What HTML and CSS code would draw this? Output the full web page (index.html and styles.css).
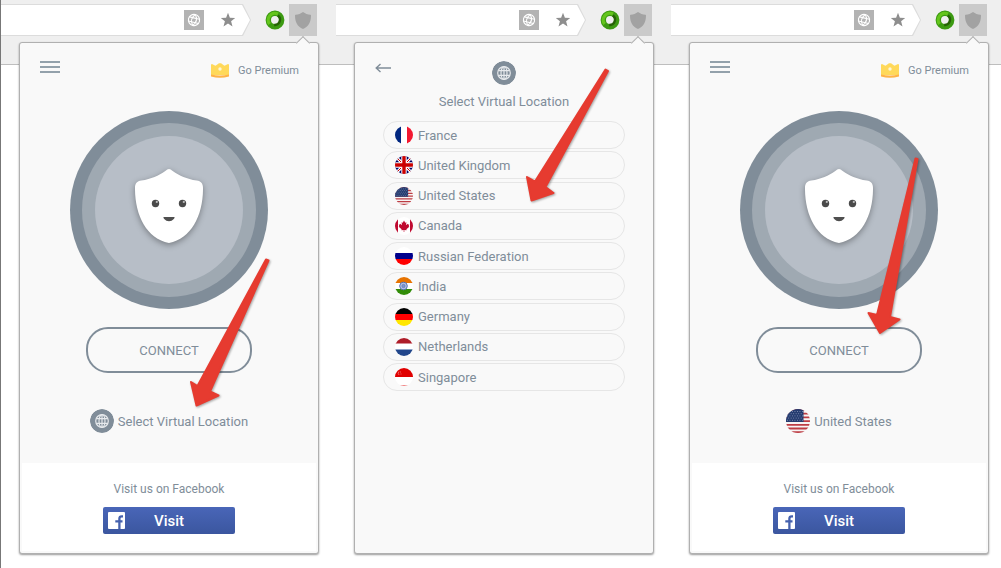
FILE: index.html
```html
<!DOCTYPE html>
<html lang="en">
<head>
    <meta charset="utf-8">
    <meta name="viewport" content="width=device-width, initial-scale=1">
    <title>Select Virtual Location</title>
    <link rel="stylesheet" href="styles.css">
</head>
<body>

    <!-- shared icons -->
    <svg class="sprite" width="0" height="0" aria-hidden="true">
        <symbol id="globe" viewBox="0 0 24 24">
            <circle cx="12" cy="12" r="12" fill="#808d99"/>
            <g fill="none" stroke="#e6e9ec" stroke-width="1.2">
                <circle cx="12" cy="12" r="6.3"/>
                <ellipse cx="12" cy="12" rx="3" ry="6.3"/>
                <path d="M12 5.7v12.6M6.4 9.6h11.2M6.4 14.4h11.2"/>
            </g>
        </symbol>
        <symbol id="translate" viewBox="0 0 20 20">
            <path fill="#b3b3b3" d="M0 0h20v20H0z"/>
            <g fill="none" stroke="#fff" stroke-width="1.1" transform="rotate(14 10 10)">
                <circle cx="10" cy="10" r="5.6"/>
                <path d="M10 4.400q-4.800 5.600 0 11.200M10 4.400q4.800 5.600 0 11.200M5 8h10M5 12.300h10"/>
            </g>
        </symbol>
        <symbol id="star" viewBox="0 0 16 16">
            <path fill="#8e8e8e" d="M8 .8l1.9 4.9 5.3.3-4.1 3.3 1.4 5.2L8 11.6l-4.5 2.9 1.4-5.2L.8 6l5.3-.3z"/>
        </symbol>
        <symbol id="ring" viewBox="0 0 20 20">
            <circle cx="10" cy="10" r="6.700" fill="none" stroke="#3c9a12" stroke-width="5.400"/>
            <path fill="none" stroke="#64c51c" stroke-width="3.200" d="M4.600 14A6.700 6.700 0 0 1 13 4"/>
            <path fill="none" stroke="#276107" stroke-width="2.400" d="M12.800 5.600a5.200 5.200 0 0 1-3.600 9.400"/>
        </symbol>
        <symbol id="shield" viewBox="0 0 16 17">
            <path fill="#a2a2a2" d="M8 0c2.300 1.700 4.600 2.500 7.400 2.700.4 0 .6.300.6.700 0 6.100-2.400 11.300-8 13.600C2.400 14.700 0 9.500 0 3.400c0-.4.2-.7.6-.7C3.400 2.500 5.700 1.700 8 0z"/>
        </symbol>
        <symbol id="crown" viewBox="0 0 18 15">
            <path fill="#ffd95a" d="M0 1.500l1-.5 3.500 1.800L8 .3h2l3.500 2.500L17 1l1 .5V12H0z"/>
            <circle cx="9" cy="6" r="1.700" fill="#fff6d5"/>
            <path fill="#ffb347" d="M0 11.500q9 1.800 18 0v2.100q-9 2.400-18 0z"/>
        </symbol>
        <symbol id="face" viewBox="0 0 68 74">
            <path fill="#fff" d="M34 0c1.300 0 2.200.9 3.700 1.900 6.800 4.800 14 7.900 24 9.700 4.300.8 6.300 3 6.300 7.200C68.200 46 56.500 69.500 34 74 11.500 69.500-.2 46 0 18.800c0-4.200 2-6.400 6.300-7.200 10-1.800 17.200-4.900 24-9.700C31.800.9 32.700 0 34 0z"/>
            <circle cx="20.500" cy="34.500" r="3.700" fill="#4a4a4a"/>
            <circle cx="47.500" cy="34.500" r="3.700" fill="#4a4a4a"/>
            <circle cx="21.800" cy="32.900" r="1.100" fill="#bbb"/>
            <circle cx="48.800" cy="32.900" r="1.100" fill="#bbb"/>
            <path fill="#4f4f4f" d="M28.500 48h11q.3 1-.7 2-2 2.200-4.800 2.200T29.200 50q-1-1-.7-2z"/>
        </symbol>
        <symbol id="facebook" viewBox="0 0 17 17">
            <rect width="17" height="17" rx="1" fill="#fff"/>
            <path fill="none" stroke="#4460ad" stroke-width="2.300" d="M15 4.300h-1.300q-2.300 0-2.300 2.300V17M7.300 9.400h7.200"/>
        </symbol>
        <symbol id="flag-us" viewBox="0 0 24 24">
            <path fill="#f7f4f4" d="M0 0h24v24H0z"/>
            <path stroke="#bd3d44" stroke-width="1.800" d="M0 1h24M0 4.700h24M0 8.400h24M0 12.100h24M0 15.800h24M0 19.500h24M0 23.200h24"/>
            <path fill="#253c70" d="M0 0h17.500v13H0z"/>
            <path stroke="#8794b8" stroke-width=".9" stroke-dasharray=".9 1.600" d="M1 2.500h16M2.200 4.700h15M1 6.900h16M2.200 9.100h15M1 11.300h16"/>
        </symbol>
    </svg>

    <section class="pane">
        <div class="toolbar">
            <div class="omnibox">
                <div class="omnibox-inner">
                    <input class="address" type="text" aria-label="Address">
                    <svg class="icon-translate"><use href="#translate"/></svg>
                    <svg class="icon-star"><use href="#star"/></svg>
                </div>
            </div>
            <svg class="icon-ring"><use href="#ring"/></svg>
            <button class="extension" aria-label="Extension"><svg class="icon-shield"><use href="#shield"/></svg></button>
        </div>
        <div class="popup">
            <div class="home">
                <div class="top">
                    <button class="menu" aria-label="Menu"><span></span><span></span><span></span></button>
                    <a class="premium" href="#"><svg class="icon-crown"><use href="#crown"/></svg>Go Premium</a>
                </div>
                <div class="status"><div class="status-mid"><div class="status-in"><svg class="face"><use href="#face"/></svg></div></div></div>
                <button class="connect">CONNECT</button>
                <button class="location"><svg class="icon-location"><use href="#globe"/></svg>Select Virtual Location</button>
            </div>
            <div class="social">
                <p>Visit us on Facebook</p>
                <a class="visit" href="#"><svg class="icon-facebook"><use href="#facebook"/></svg><span>Visit</span></a>
            </div>
        </div>
        <svg class="pointer pointer-location" viewBox="0 0 90 160" aria-hidden="true"><path d="M80 11.500L82.500 12.500 24 143.500 32.500 147.500 10.500 157.500 5 134 11.500 138z"/></svg>
    </section>

    <section class="pane">
        <div class="toolbar">
            <div class="omnibox">
                <div class="omnibox-inner">
                    <input class="address" type="text" aria-label="Address">
                    <svg class="icon-translate"><use href="#translate"/></svg>
                    <svg class="icon-star"><use href="#star"/></svg>
                </div>
            </div>
            <svg class="icon-ring"><use href="#ring"/></svg>
            <button class="extension" aria-label="Extension"><svg class="icon-shield"><use href="#shield"/></svg></button>
        </div>
        <div class="popup">
            <div class="picker">
                <button class="back" aria-label="Back"><svg viewBox="0 0 16 10"><path fill="none" stroke="#808d99" stroke-width="1.400" d="M16 5H1.500M5.500 1L1.200 5l4.300 4"/></svg></button>
                <div class="picker-title">
                    <svg class="icon-location"><use href="#globe"/></svg>
                    <h1>Select Virtual Location</h1>
                </div>
                <ul class="countries">
                    <li><button><svg class="flag" viewBox="0 0 18 18"><path fill="#fff" d="M0 0h18v18H0z"/><path fill="#00267f" d="M0 0h6v18H0z"/><path fill="#f31830" d="M12 0h6v18h-6z"/></svg>France</button></li>
                    <li><button><svg class="flag" viewBox="0 0 18 18"><path fill="#006" d="M0 0h18v18H0z"/><path stroke="#fff" stroke-width="3" d="M0 0l18 18M18 0L0 18"/><path stroke="#c00" stroke-width="1" d="M0 0l18 18M18 0L0 18"/><path stroke="#fff" stroke-width="5.400" d="M9 0v18M0 9h18"/><path stroke="#c00" stroke-width="3.400" d="M9 0v18M0 9h18"/></svg>United Kingdom</button></li>
                    <li><button><svg class="flag"><use href="#flag-us"/></svg>United States</button></li>
                    <li><button><svg class="flag" viewBox="0 0 18 18"><path fill="#fff" d="M0 0h18v18H0z"/><path fill="#bf0a30" d="M0 0h3v18H0zM15 0h3v18h-3zM9 3.500l1.200 2.200 1.200-.5-.4 3 1.600-1.500.4.900 1.200-.2-.5 1.900.6.500-2.900 2.500.2 1-2.300-.3v2h-.6v-2l-2.300.3.2-1-2.900-2.500.6-.5-.5-1.900 1.200.2.400-.9 1.600 1.500-.4-3 1.200.5z"/></svg>Canada</button></li>
                    <li><button><svg class="flag" viewBox="0 0 18 18"><path fill="#fff" d="M0 0h18v6H0z"/><path fill="#00008b" d="M0 6h18v6H0z"/><path fill="#f00" d="M0 12h18v6H0z"/></svg>Russian Federation</button></li>
                    <li><button><svg class="flag" viewBox="0 0 18 18"><path fill="#fff" d="M0 0h18v18H0z"/><path fill="#e77300" d="M0 0h18v6H0z"/><path fill="#318c08" d="M0 12h18v6H0z"/><circle cx="8.500" cy="9" r="3.800" fill="#b8c5e6" stroke="#5470b4"/><circle cx="8.500" cy="9" r="1.700" fill="#7f97cf" stroke="#5470b4" stroke-width=".6"/></svg>India</button></li>
                    <li><button><svg class="flag" viewBox="0 0 18 18"><path d="M0 0h18v6H0z"/><path fill="#f00" d="M0 6h18v6H0z"/><path fill="#ffe600" d="M0 12h18v6H0z"/></svg>Germany</button></li>
                    <li><button><svg class="flag" viewBox="0 0 18 18"><path fill="#fff" d="M0 0h18v18H0z"/><path fill="#ae1c28" d="M0 0h18v5.500H0z"/><path fill="#21468b" d="M0 11.500h18V18H0z"/></svg>Netherlands</button></li>
                    <li><button><svg class="flag" viewBox="0 0 18 18"><path fill="#fff" d="M0 0h18v18H0z"/><path fill="#e00000" d="M0 0h18v9H0zM5 17.400h8v1H5z"/><path fill="none" stroke="#f37c7c" stroke-width=".8" d="M4 3.500q-1.600 2 0 3.500M5.500 3.500v1M6 5.500v1"/></svg>Singapore</button></li>
                </ul>
            </div>
        </div>
        <svg class="pointer pointer-country" viewBox="0 0 100 150" aria-hidden="true"><path d="M86.500 10.500L89 12 26.500 128 34.500 134 12.500 141.500 8 118 16 122.500z"/></svg>
    </section>

    <section class="pane pane-last">
        <div class="toolbar">
            <div class="omnibox">
                <div class="omnibox-inner">
                    <input class="address" type="text" aria-label="Address">
                    <svg class="icon-translate"><use href="#translate"/></svg>
                    <svg class="icon-star"><use href="#star"/></svg>
                </div>
            </div>
            <svg class="icon-ring"><use href="#ring"/></svg>
            <button class="extension" aria-label="Extension"><svg class="icon-shield"><use href="#shield"/></svg></button>
        </div>
        <div class="popup">
            <div class="home">
                <div class="top">
                    <button class="menu" aria-label="Menu"><span></span><span></span><span></span></button>
                    <a class="premium" href="#"><svg class="icon-crown"><use href="#crown"/></svg>Go Premium</a>
                </div>
                <div class="status"><div class="status-mid"><div class="status-in"><svg class="face"><use href="#face"/></svg></div></div></div>
                <button class="connect">CONNECT</button>
                <button class="location"><svg class="icon-location"><use href="#flag-us"/></svg>United States</button>
            </div>
            <div class="social">
                <p>Visit us on Facebook</p>
                <a class="visit" href="#"><svg class="icon-facebook"><use href="#facebook"/></svg><span>Visit</span></a>
            </div>
        </div>
        <svg class="pointer pointer-connect" viewBox="0 0 60 190" aria-hidden="true"><path d="M55.500 8.500L57.500 9 30 167 39.500 169.500 20 183 8.500 163 17 165z"/></svg>
    </section>

</body>
</html>
```
FILE: styles.css
```css
* {
    box-sizing: border-box;
}

body {
    margin: 0;
    min-height: 100vh;
    display: grid;
    grid-template-columns: 335fr 335fr 330fr;
    border-left: 1px solid #777;
    background: #fff;
    color: #808d99;
    font-family: Roboto, "Liberation Sans", sans-serif;
    font-size: 13px;
}

button {
    padding: 0;
    border: 0;
    background: none;
    color: inherit;
    font: inherit;
    cursor: pointer;
}

a {
    color: inherit;
    text-decoration: none;
}

svg {
    display: block;
    flex: none;
}

.sprite {
    position: absolute;
}

.pane {
    position: relative;
    display: flex;
    flex-direction: column;
    min-width: 0;
    padding-bottom: 14px;
}

/* browser toolbar */
.toolbar {
    display: flex;
    align-items: flex-start;
    height: 65px;
    padding: 4px 19px 0 0;
    background: #efefef;
    border-bottom: 1px solid #bebebe;
}

.pane-last .toolbar {
    padding-right: 14px;
}

.omnibox {
    flex: 1;
    min-width: 0;
    margin-right: 14px;
    padding: 1px 1px 1px 0;
    background: #dcdcdc;
    clip-path: polygon(0 0, calc(100% - 8px) 0, 100% 50%, calc(100% - 8px) 100%, 0 100%);
}

.omnibox-inner {
    display: flex;
    align-items: center;
    height: 30px;
    padding-right: 14px;
    background: #fff;
    clip-path: polygon(0 0, calc(100% - 8px) 0, 100% 50%, calc(100% - 8px) 100%, 0 100%);
}

.address {
    flex: 1;
    min-width: 0;
    height: 30px;
    padding: 0 8px;
    border: 0;
    background: none;
    font: inherit;
    outline: none;
}

.icon-translate {
    width: 20px;
    height: 20px;
    margin-right: 16px;
}

.icon-star {
    width: 16px;
    height: 16px;
}

.icon-ring {
    width: 20px;
    height: 20px;
    margin: 6px 4px 0 0;
}

.extension {
    display: flex;
    align-items: center;
    justify-content: center;
    width: 28px;
    height: 32px;
    background: #cacaca;
}

.icon-shield {
    width: 16px;
    height: 17px;
}

/* extension popup */
.popup {
    position: relative;
    flex: 1;
    display: flex;
    flex-direction: column;
    margin: -23px 17px 0 18px;
    padding: 2px;
    background: #f9f9f9;
    border: 1px solid #b0b0b0;
    border-radius: 3px;
    box-shadow: 0 1px 2px rgba(0, 0, 0, .4);
}

.pane-last .popup {
    margin-right: 12px;
}

.popup::before {
    content: "";
    position: absolute;
    top: -5px;
    right: 10px;
    width: 9px;
    height: 9px;
    background: #f9f9f9;
    border: 1px solid #b0b0b0;
    border-width: 1px 0 0 1px;
    transform: rotate(45deg);
}

.home {
    flex: 1;
    display: flex;
    flex-direction: column;
    align-items: center;
}

.top {
    align-self: stretch;
    display: flex;
    justify-content: space-between;
    align-items: flex-start;
    height: 66px;
    padding: 15px 17px 0 18px;
}

.menu {
    display: flex;
    flex-direction: column;
    justify-content: space-between;
    width: 20px;
    height: 12px;
    margin-top: 1px;
}

.menu span {
    height: 2px;
    background: #93a1ab;
}

.premium {
    display: flex;
    align-items: center;
    gap: 9px;
    height: 20px;
    font-size: 11px;
}

.icon-crown {
    width: 18px;
    height: 15px;
}

.status,
.status-mid,
.status-in {
    display: flex;
    align-items: center;
    justify-content: center;
    border-radius: 50%;
}

.status {
    width: 198px;
    height: 198px;
    background: #808d99;
}

.status-mid {
    width: 174px;
    height: 174px;
    background: #9fa9b2;
}

.status-in {
    width: 148px;
    height: 148px;
    background: #b7bec7;
}

.face {
    width: 68px;
    height: 74px;
    margin-bottom: 8px;
    filter: drop-shadow(0 2px 3px rgba(0, 0, 0, .35));
}

.connect {
    width: 166px;
    height: 46px;
    margin-top: 18px;
    border: 2px solid #808d99;
    border-radius: 22px;
}

.location {
    display: flex;
    align-items: center;
    gap: 4px;
    margin-top: 36px;
}

.icon-location {
    width: 24px;
    height: 24px;
    border-radius: 50%;
}

.social {
    display: flex;
    flex-direction: column;
    align-items: center;
    height: 88px;
    padding-top: 18px;
    background: #fff;
    font-size: 12px;
}

.social p {
    margin: 0 0 10px;
    line-height: 16px;
}

.visit {
    display: flex;
    align-items: center;
    width: 132px;
    height: 27px;
    padding: 0 5px;
    border-radius: 2px;
    background: linear-gradient(#4966b8, #3b569f);
    color: #fff;
    font-size: 15px;
    font-weight: 500;
}

.visit span {
    flex: 1;
    padding-right: 17px;
    text-align: center;
}

.icon-facebook {
    width: 17px;
    height: 17px;
}

/* location list */
.picker {
    display: grid;
    grid-template-columns: 16px 1fr 16px;
    padding: 16px 26px 0 18px;
}

.back {
    align-self: start;
    height: 14px;
}

.back svg {
    width: 16px;
    height: 10px;
}

.picker-title {
    display: flex;
    flex-direction: column;
    align-items: center;
    padding-left: 8px;
}

.picker-title h1 {
    margin: 8px 0 10px;
    font-size: 13px;
    font-weight: 400;
    line-height: 18px;
}

.countries {
    grid-column: 1 / -1;
    display: flex;
    flex-direction: column;
    justify-content: space-between;
    height: 270px;
    margin: 0 0 0 8px;
    padding: 0;
    list-style: none;
}

.countries button {
    display: flex;
    align-items: center;
    gap: 5px;
    width: 100%;
    height: 28px;
    padding: 0 11px;
    border: 1px solid #e6e6e6;
    border-radius: 14px;
}

.flag {
    width: 18px;
    height: 18px;
    border-radius: 50%;
}

/* red arrows drawn over the popups */
.pointer {
    position: absolute;
    fill: #e63b30;
    stroke: #e63b30;
    stroke-width: 2;
    stroke-linejoin: round;
    filter: drop-shadow(1px 1px 1px rgba(0, 0, 0, .35));
    pointer-events: none;
}

.pointer-location {
    top: 248px;
    left: 185px;
    width: 90px;
    height: 160px;
}

.pointer-country {
    top: 59px;
    left: 183px;
    width: 100px;
    height: 150px;
}

.pointer-connect {
    top: 150px;
    left: 189px;
    width: 60px;
    height: 190px;
}
```
